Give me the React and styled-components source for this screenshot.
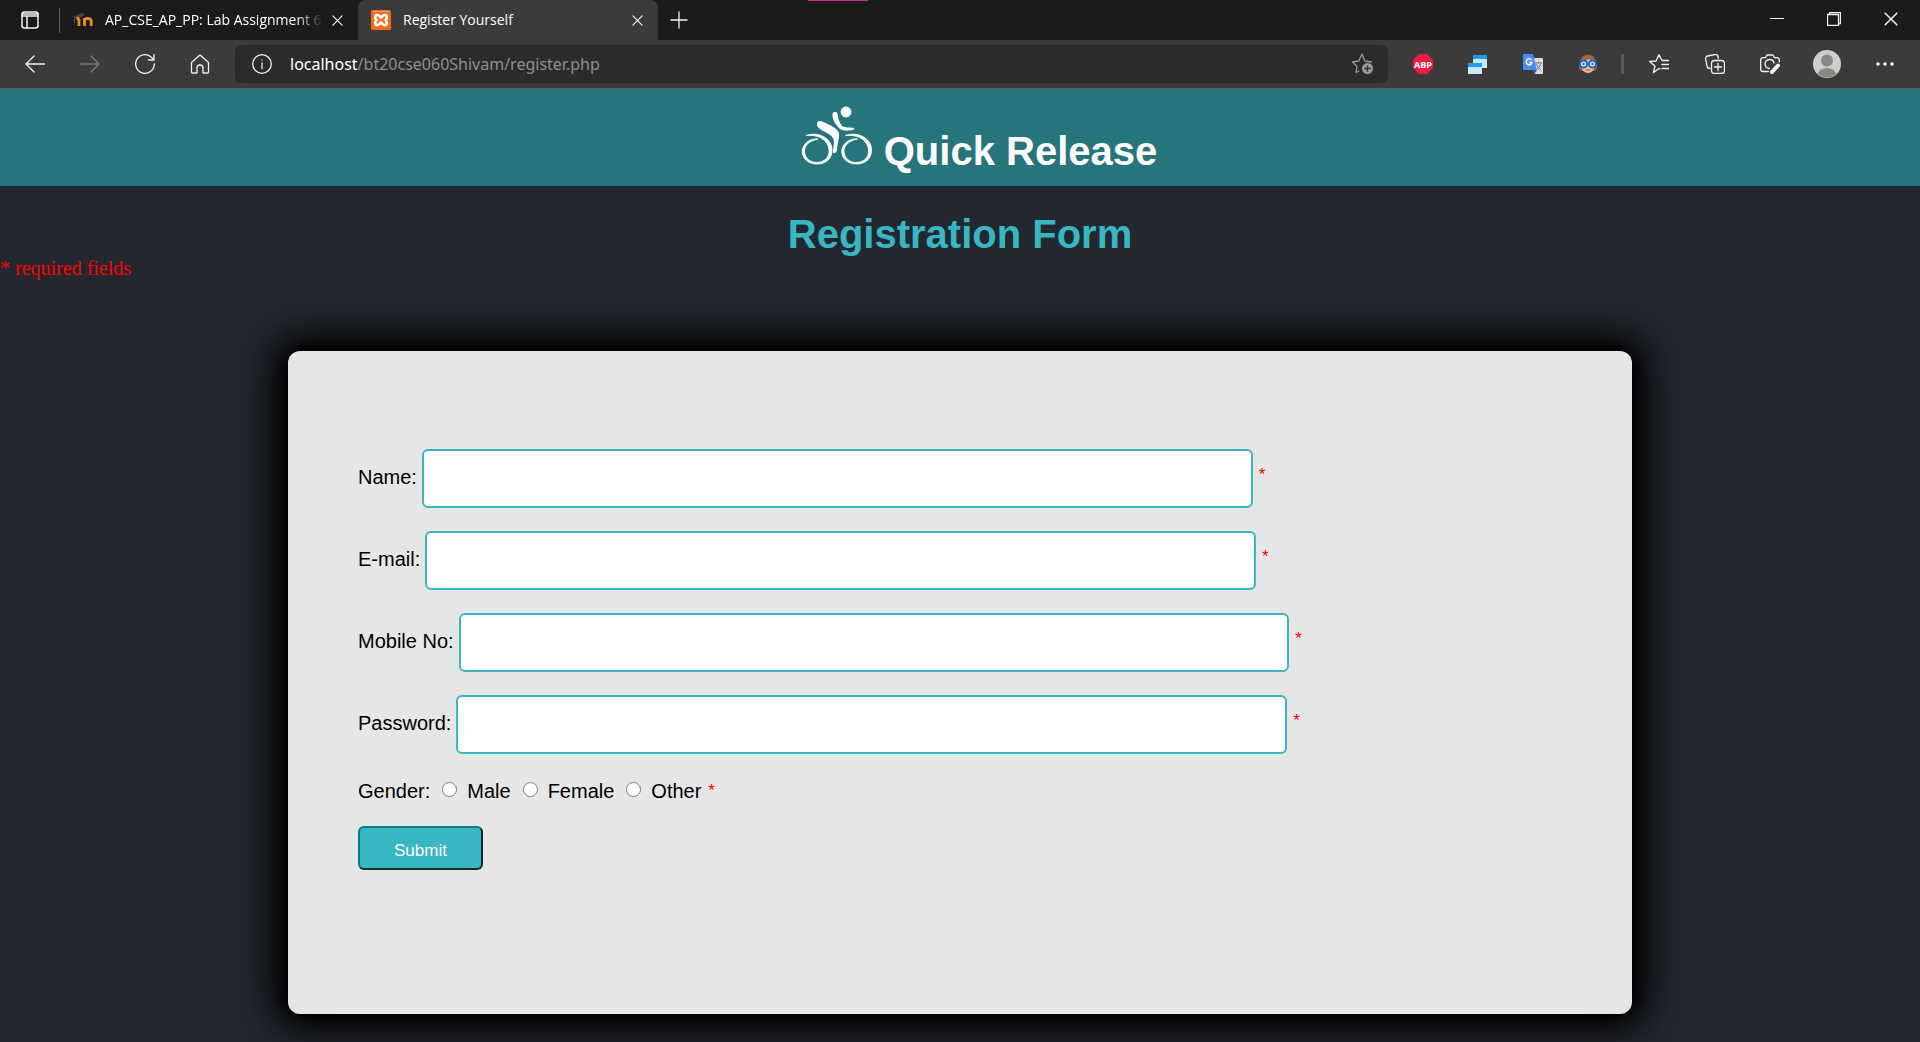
import React from "react";
import styled, { createGlobalStyle } from "styled-components";

const GlobalStyle = createGlobalStyle`
  * { box-sizing: border-box; }
  body { margin: 0; background: #23272f; }
`;

const Window = styled.div`
  display: flex;
  flex-direction: column;
  min-height: 100vh;
  font-family: "Liberation Sans", Arial, sans-serif;
`;

const TabBar = styled.div`
  display: flex;
  align-items: stretch;
  height: 40px;
  background: #1b1b1b;
  position: relative;
  font-family: "Open Sans", "Noto Sans", sans-serif;
`;

const AccentLine = styled.div`
  position: absolute;
  top: 0;
  left: 42.1%;
  width: 60px;
  height: 1px;
  background: #d02b92;
`;

const IconButton = styled.button`
  display: flex;
  align-items: center;
  justify-content: center;
  flex: none;
  width: ${(p) => p.$width || 55}px;
  height: ${(p) => p.$height || 40}px;
  padding: 0;
  border: 0;
  background: none;
  color: ${(p) => p.$color || "#f2f2f2"};
`;

const TabDivider = styled.span`
  width: 1px;
  height: 25px;
  align-self: center;
  background: #5c5c5c;
`;

const Tab = styled.div`
  display: flex;
  align-items: center;
  width: ${(p) => p.$width}px;
  padding: 0 11px 0 ${(p) => p.$inset}px;
  border-radius: 8px 8px 0 0;
  background: ${(p) => (p.$active ? "#3b3b3b" : "transparent")};
  color: #fff;
`;

const TabTitle = styled.span`
  flex: 1;
  min-width: 0;
  margin-left: 12px;
  overflow: hidden;
  white-space: nowrap;
  font-size: 14px;
  line-height: 20px;
  mask-image: ${(p) => (p.$faded ? "linear-gradient(90deg, #000 86%, transparent 98%)" : "none")};
`;

const WindowControls = styled.div`
  display: flex;
  margin: 0 1px 0 auto;
`;

const Toolbar = styled.div`
  display: flex;
  align-items: center;
  height: 49px;
  padding: 0 8px 0 7px;
  background: #3b3b3b;
  border-bottom: 1px solid #5f5f5f;
  font-family: "Noto Sans", "Open Sans", sans-serif;
`;

const AddressBar = styled.div`
  display: flex;
  flex: 1;
  align-items: center;
  height: 38px;
  margin: 0 7px 0 8px;
  padding-left: 17px;
  border-radius: 6px;
  background: #2b2b2b;
  color: #8e8e8e;
`;

const Address = styled.span`
  flex: 1;
  margin-left: 18px;
  font-size: 16px;
  line-height: 24px;
`;

const Host = styled.span`
  color: #fff;
`;

const ToolDivider = styled.span`
  width: 3px;
  height: 20px;
  margin: 0 7px 0 6px;
  background: #5b5b5b;
`;

const Banner = styled.header`
  display: flex;
  align-items: flex-end;
  justify-content: center;
  gap: 11px;
  height: 97px;
  padding: 0 0 12px 38px;
  background: #26757b;
`;

const BrandName = styled.h1`
  margin: 0;
  color: #fffafa;
  font-size: 40px;
  line-height: 46px;
`;

const BikeMark = styled.svg`
  margin-bottom: 8px;
`;

const FormTitle = styled.h1`
  margin: 25px 0 0;
  color: #38b6c1;
  font-size: 40px;
  line-height: 46px;
  text-align: center;
`;

const RequiredNote = styled.p`
  margin: 0;
  color: #f00;
  font-family: "Liberation Serif", "Times New Roman", serif;
  font-size: 20px;
  line-height: 22px;
`;

const Card = styled.form`
  display: flex;
  flex-direction: column;
  gap: 23px;
  width: 70%;
  margin: 72px auto 28px;
  padding: 98px 70px 144px;
  border-radius: 12px;
  background: #e6e6e6;
  box-shadow: 0 0 10px #000, 0 0 40px 8px #000, 0 0 40px 4px #000;
  color: #000;
  font-size: 20px;
  line-height: 24px;
`;

const Field = styled.div`
  display: flex;
  align-items: center;
  gap: 5px;
`;

const FieldLabel = styled.label`
  margin-bottom: 4px;
`;

const TextInput = styled.input`
  width: 69%;
  height: 59px;
  padding: 0 16px;
  border: 2px solid #38b6c1;
  border-radius: 6px;
  background: #fff;
  font: inherit;
`;

const Star = styled.span`
  margin-bottom: ${(p) => (p.$inline ? 0 : 8)}px;
  margin-left: 1px;
  color: #f00;
  font-size: 17px;
  line-height: 20px;
`;

const GenderGroup = styled.div`
  display: flex;
  align-items: center;
  gap: 6px;
  height: 24px;
  margin-top: 2px;
`;

const Choice = styled.label`
  display: flex;
  align-items: center;
  gap: 10px;
`;

const Radio = styled.input`
  width: 15px;
  height: 15px;
  margin: 0 0 3px 6px;
`;

const SubmitButton = styled.button`
  align-self: flex-start;
  width: 125px;
  height: 44px;
  padding: 5px 0 0;
  border: 2px solid;
  border-color: #008080 #002c2e #002c2e #008080;
  border-radius: 6px;
  background: #38b6c1;
  color: #fff;
  font-family: inherit;
  font-size: 17px;
  line-height: 20px;
`;

const Line = ({ size = 20, box = 20, width = 1.3, children }) => (
  <svg width={size} height={size} viewBox={`0 0 ${box} ${box}`} fill="none" stroke="currentColor"
    strokeWidth={width} strokeLinecap="round" strokeLinejoin="round" aria-hidden="true">
    {children}
  </svg>
);

const CloseGlyph = ({ size = 11 }) => (
  <Line size={size} box={12}><path d="M1 1l10 10M11 1L1 11" /></Line>
);

const MoodleIcon = () => (
  <svg width="20" height="16" viewBox="0 0 20 16" aria-hidden="true">
    <path d="M0 5L9 1l3 2-8 4z" fill="#4a4340" />
    <path d="M1.500 6v5" stroke="#5a4a40" strokeWidth="1" />
    <path d="M6 14V7M3.500 6.500h3M11.500 14V6M11.500 9q0-2.500 3.300-2.500T18.200 9v5" stroke="#ef8a27" strokeWidth="2.800" fill="none" />
  </svg>
);

const XamppIcon = () => (
  <svg width="20" height="20" viewBox="0 0 20 20" aria-hidden="true">
    <rect width="20" height="20" rx="1.500" fill="#ee6a1c" />
    <path d="M2 1.500h16" stroke="#f7a878" />
    <path d="M6.500 5C4 4.600 3.200 8.200 5.500 10c-2.300 1.800-1.500 5.400 1 5 2.500 0 2.300-2.600 3.500-2.600s1 2.600 3.500 2.600c2.500.4 3.300-3.200 1-5 2.300-1.800 1.500-5.400-1-5-2.500 0-2.300 2.600-3.500 2.600S9 5 6.500 5z" fill="none" stroke="#fff" strokeWidth="2.700" />
  </svg>
);

const Wheel = ({ x }) => (
  <g transform={`translate(${x} 0)`} strokeWidth="0.900">
    <path d="M5 29.500C16 25.500 28 31 30.500 40C33 51 26 58 16 58C6 58 0 51 1.500 43C3.500 36 10 32.500 17 33C9 34.500 3.500 39 3.500 45C3.500 52 9 56.500 15.500 56.500C25 56.500 30 49 27.500 41C24.500 32 16 28.500 5 29.500z" />
  </g>
);

const BikeLogo = () => (
  <BikeMark width="72" height="60" viewBox="0 0 72 60" fill="#fff" stroke="#fff" role="img" aria-label="Cyclist">
    <Wheel x={0} />
    <Wheel x={39.5} />
    <circle cx="45" cy="6" r="5.400" stroke="none" />
    <path d="M31.500 8C32 5 36 5 36.500 8C37 12 38 16 41 20C44 22 49 21 53 22C54 23 53 24 51 24C47 25 42 25 39 23C35 19 31 14 31.500 8z" stroke="none" />
    <path d="M16 18C16 15 19 14 22 16C27 18 34 21 37 25C40 29 36 38 36 44C35 48 32 48 32 46C32 41 34 36 32 32C29 27 20 25 17 21C16 20 16 19 16 18z" stroke="none" />
  </BikeMark>
);

const TextField = ({ id, label, type = "text" }) => (
  <Field>
    <FieldLabel htmlFor={id}>{label}</FieldLabel>
    <TextInput id={id} name={id} type={type} />
    <Star>*</Star>
  </Field>
);

export default function App() {
  return (
    <>
      <GlobalStyle />
      <Window>
        <TabBar>
          <AccentLine />
          <IconButton $width={59} aria-label="Tab actions">
            <Line width={1.5}>
              <rect x="2" y="2" width="16" height="16" rx="2.500" />
              <path d="M2 4h16M2 6h16M7 7v11" />
            </Line>
          </IconButton>
          <TabDivider />
          <Tab $width={298} $inset={13}>
            <MoodleIcon />
            <TabTitle $faded>AP_CSE_AP_PP: Lab Assignment 6</TabTitle>
            <IconButton $width={20} aria-label="Close tab"><CloseGlyph /></IconButton>
          </Tab>
          <Tab $active $width={300} $inset={13}>
            <XamppIcon />
            <TabTitle>Register Yourself</TabTitle>
            <IconButton $width={20} aria-label="Close tab"><CloseGlyph /></IconButton>
          </Tab>
          <IconButton $width={42} aria-label="New tab">
            <Line size={18} box={18}><path d="M9 1v16M1 9h16" /></Line>
          </IconButton>
          <WindowControls>
            <IconButton $width={57} $height={38} aria-label="Minimize"><Line size={14} box={14} width={1}><path d="M0 6.500h14" /></Line></IconButton>
            <IconButton $width={57} $height={38} aria-label="Restore">
              <Line size={14} box={14}><path d="M.500 2.500h11v11h-11zM2.500 2V.500h11v11H12" /></Line>
            </IconButton>
            <IconButton $width={57} $height={38} aria-label="Close window"><CloseGlyph size={14} /></IconButton>
          </WindowControls>
        </TabBar>

        <Toolbar>
          <IconButton aria-label="Back"><Line><path d="M20 10H1M9 2L1 10l8 8" /></Line></IconButton>
          <IconButton $color="#777" aria-label="Forward"><Line><path d="M0 10h19M11 2l8 8-8 8" /></Line></IconButton>
          <IconButton aria-label="Refresh">
            <Line><path d="M19.300 10A9.300 9.300 0 1 1 16 2.900L19 5.500M19 .500v5.500h-5.500" /></Line>
          </IconButton>
          <IconButton aria-label="Home">
            <Line><path d="M1.500 8.500L10 1l8.500 7.500V18a1 1 0 0 1-1 1H13v-5a3 3 0 0 0-6 0v5H2.500a1 1 0 0 1-1-1z" /></Line>
          </IconButton>
          <AddressBar>
            <IconButton $width={20} $height={38} aria-label="Site information">
              <Line><circle cx="10" cy="10" r="9.300" /><path d="M10 9v5.500M10 5.800v.2" /></Line>
            </IconButton>
            <Address><Host>localhost</Host>/bt20cse060Shivam/register.php</Address>
            <IconButton $width={50} $height={38} $color="#9a9a9a" aria-label="Add to favorites">
              <Line size={22} box={22}>
                <path d="M7 18l-3 1.500 1-6-4.500-4.500 6.300-1L10 1l2.800 7 6.500 1" />
                <circle cx="15.500" cy="15.500" r="5.500" fill="currentColor" stroke="none" />
                <path d="M15.500 12.800v5.400M12.800 15.500h5.400" stroke="#2b2b2b" />
              </Line>
            </IconButton>
          </AddressBar>
          <IconButton aria-label="Ad blocker">
            <svg width="20" height="20" viewBox="0 0 20 20">
              <path d="M6 0h8l6 6v8l-6 6H6l-6-6V6z" fill="#ed1c40" />
              <text x="10" y="13.500" textAnchor="middle" fontFamily="Open Sans, sans-serif" fontWeight="700" fontSize="9" fill="#fff">ABP</text>
            </svg>
          </IconButton>
          <IconButton aria-label="Window switcher">
            <svg width="20" height="20" viewBox="0 0 20 20">
              <path d="M5 1h14v13H5z" fill="#c9e8fb" /><path d="M5 1h14v4H5z" fill="#209cea" />
              <path d="M0 9h14v11H0z" fill="#c9e8fb" /><path d="M0 9h14v4H0z" fill="#209cea" />
            </svg>
          </IconButton>
          <IconButton aria-label="Translate">
            <svg width="20" height="20" viewBox="0 0 20 20">
              <path d="M8 4h11q1 0 1 1v14q0 1-1 1h-7z" fill="#dcdcdc" />
              <path d="M12 9h7M15.500 7.500V9M18 9q-1 5-5 7M13.500 10q1 4 4.500 6" stroke="#6d8288" fill="none" />
              <path d="M1 0h9l4 16H1q-1 0-1-1V1q0-1 1-1z" fill="#4b8bf4" /><path d="M10 16h4l-2.500 4z" fill="#3557c8" />
              <path d="M8.500 6A3 3 0 1 0 9 8.500H6" stroke="#fff" strokeWidth="1.400" fill="none" />
            </svg>
          </IconButton>
          <IconButton aria-label="Reader profile">
            <svg width="20" height="20" viewBox="0 0 20 20">
              <path d="M1 15Q1 1 10 1t9 14l-3 2H4z" fill="#9a5a35" />
              <ellipse cx="10" cy="12" rx="6.500" ry="7" fill="#f2b999" />
              <path d="M3 7Q9 7 12 4q2 3 5 3L16 3Q10-1 4 3z" fill="#a8653c" />
              <circle cx="5.500" cy="10" r="3.500" fill="#eef" stroke="#1268c4" strokeWidth="2" />
              <circle cx="14.500" cy="10" r="3.500" fill="#eef" stroke="#1268c4" strokeWidth="2" />
              <circle cx="5.500" cy="10" r="1.200" fill="#1268c4" /><circle cx="14.500" cy="10" r="1.200" fill="#1268c4" />
              <path d="M7.500 16h5" stroke="#d44840" />
            </svg>
          </IconButton>
          <ToolDivider />
          <IconButton $width={56} aria-label="Favorites">
            <Line><path d="M11 15l-1-.500-5.500 4 1.500-6.500L.500 7.500l6.500-.500L10 .800l3 5.700h6.500M13 10.500h7M13 14.500h7" /></Line>
          </IconButton>
          <IconButton aria-label="Collections">
            <Line>
              <path d="M5 14.500q-2.500 0-3-2.500L.700 5q-.500-2.500 2-3L10 .500q2.500-.300 3 2l.300 2" />
              <rect x="6.500" y="6.500" width="13" height="13" rx="3" /><path d="M13 9.500v7M9.500 13h7" />
            </Line>
          </IconButton>
          <IconButton aria-label="Web capture">
            <Line>
              <path d="M8.500 17.500H3q-2.300 0-2.300-2.300V6Q.700 3.700 3 3.700h2.500L7 1h6l1.500 2.700H17q2.300 0 2.300 2.300v2" />
              <path d="M9.500 14.500A4.500 4.500 0 1 1 14 9" />
              <path d="M18 11.500l-6 6.500" strokeWidth="4" />
            </Line>
          </IconButton>
          <IconButton $width={60} aria-label="Profile">
            <svg width="28" height="28" viewBox="0 0 28 28">
              <circle cx="14" cy="14" r="14" fill="#d0cecb" />
              <circle cx="14" cy="10.500" r="6" fill="#8a8683" />
              <path d="M4.500 24Q7 18 14 18t9.500 6Q14 31 4.500 24z" fill="#8a8683" />
            </svg>
          </IconButton>
          <IconButton aria-label="More">
            <svg width="18" height="4" viewBox="0 0 18 4" fill="#fff"><circle cx="2" cy="2" r="1.700" /><circle cx="9" cy="2" r="1.700" /><circle cx="16" cy="2" r="1.700" /></svg>
          </IconButton>
        </Toolbar>

        <Banner>
          <BikeLogo />
          <BrandName>Quick Release</BrandName>
        </Banner>

        <main>
          <FormTitle>Registration Form</FormTitle>
          <RequiredNote>* required fields</RequiredNote>
          <Card onSubmit={(e) => e.preventDefault()}>
            <TextField id="name" label="Name:" />
            <TextField id="email" label="E-mail:" type="email" />
            <TextField id="mobile" label="Mobile No:" type="tel" />
            <TextField id="password" label="Password:" type="password" />
            <GenderGroup role="radiogroup" aria-label="Gender">
              <span>Gender:</span>
              {["Male", "Female", "Other"].map((g) => (
                <Choice key={g}><Radio type="radio" name="gender" value={g} />{g}</Choice>
              ))}
              <Star $inline>*</Star>
            </GenderGroup>
            <SubmitButton type="submit">Submit</SubmitButton>
          </Card>
        </main>
      </Window>
    </>
  );
}
